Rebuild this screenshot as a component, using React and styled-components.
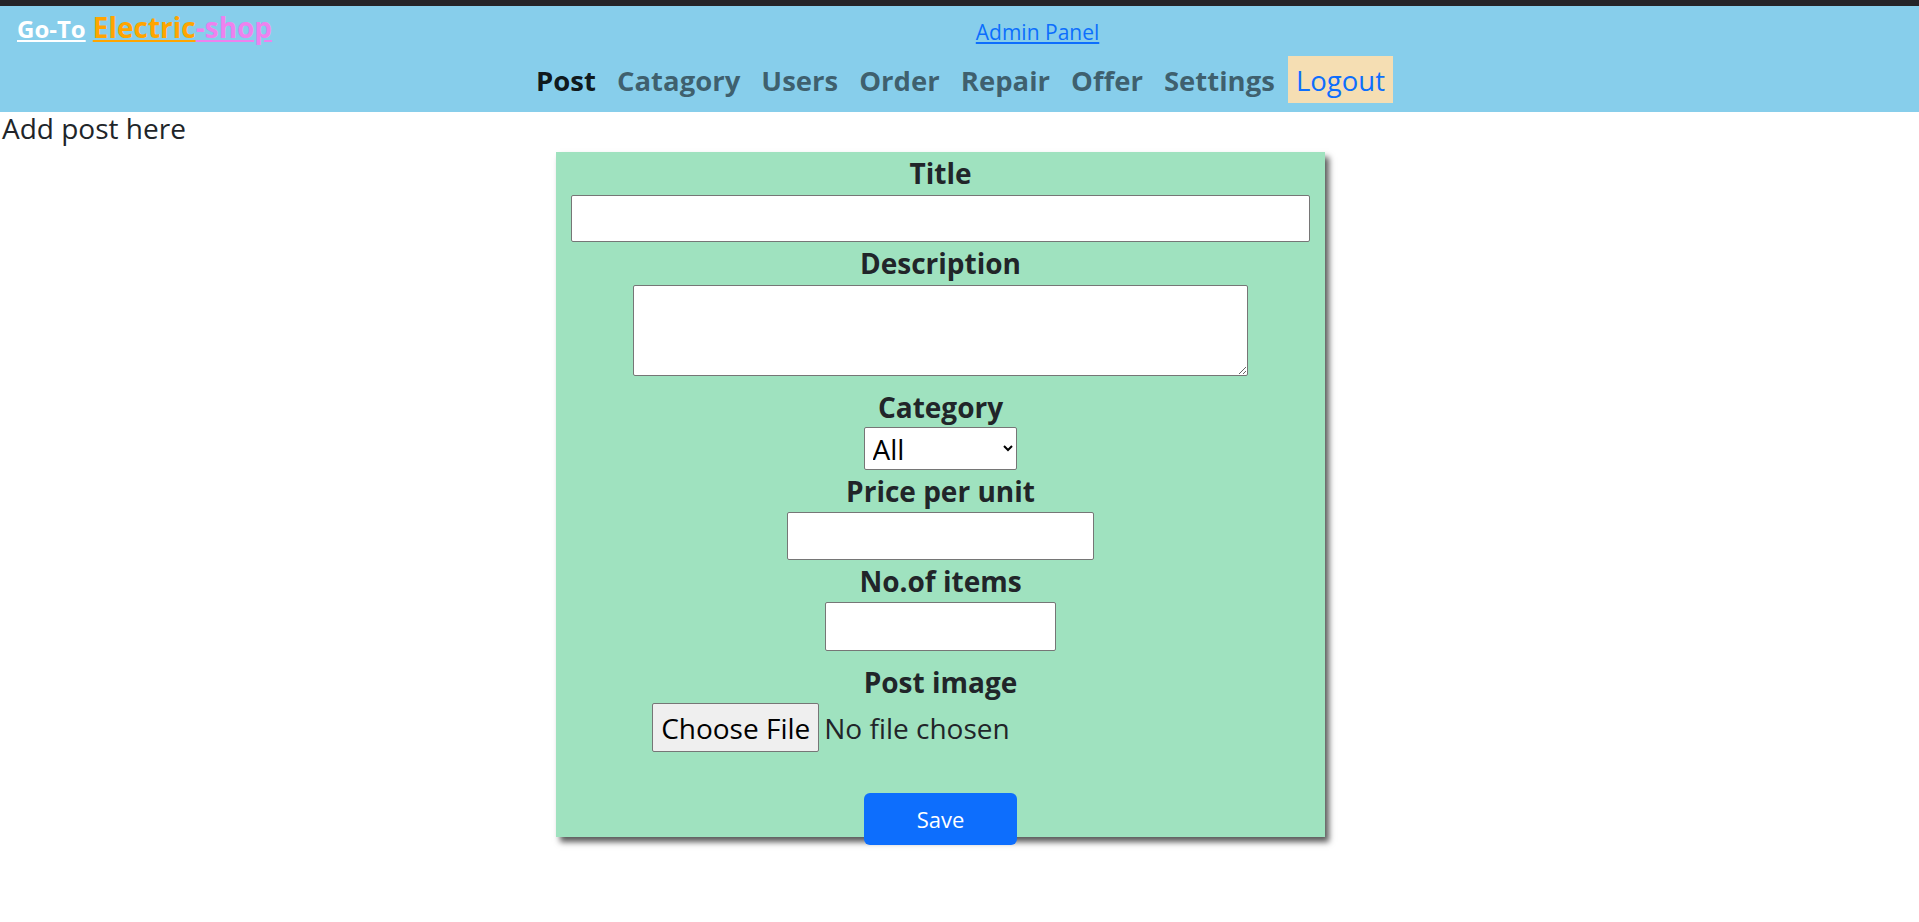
import React from "react";
import styled, { createGlobalStyle } from "styled-components";

const GlobalStyle = createGlobalStyle`
  html, body {
    margin: 0;
    padding: 0;
    background: #ffffff;
  }
  body {
    font-family: "Open Sans", "DejaVu Sans", sans-serif;
    color: #212529;
  }
  *, *::before, *::after {
    box-sizing: border-box;
  }
`;

const TopStrip = styled.div`
  height: 6px;
  background: #252428;
`;

const Header = styled.header`
  background: #87ceeb;
  padding: 0 17px 9px;
`;

const BrandRow = styled.div`
  display: flex;
  justify-content: space-between;
  align-items: flex-start;
  height: 50px;
`;

const Brand = styled.div`
  display: flex;
  align-items: baseline;
  gap: 7px;
  padding-top: 1px;
  line-height: 40px;
  font-weight: 700;
`;

const GoTo = styled.a`
  font-size: 24px;
  color: #ffffff;
  text-decoration: underline;
`;

const ShopName = styled.a`
  font-size: 28px;
  text-decoration: none;
`;

const ShopPart = styled.span`
  color: ${(p) => p.$color};
  text-decoration: underline;
  text-decoration-color: ${(p) => p.$color};
`;

const AdminLink = styled.a`
  padding-top: 11px;
  font-size: 21px;
  line-height: 30px;
  color: #0d6efd;
  text-decoration: underline;
`;

const Spacer = styled.div`
  width: 99px;
`;

const Nav = styled.nav`
  display: flex;
  justify-content: center;
  gap: 5px;
  padding-left: 2px;
`;

const NavLink = styled.a`
  display: block;
  padding: 5px 8px 3px;
  font-size: 27.5px;
  line-height: 39px;
  font-weight: ${(p) => (p.$logout ? 400 : 700)};
  color: ${(p) =>
    p.$logout ? "#0d6efd" : p.$active ? "rgba(0,0,0,0.9)" : "rgba(0,0,0,0.55)"};
  background: ${(p) => (p.$logout ? "#f5deb3" : "transparent")};
  text-decoration: none;
`;

const PageTitle = styled.div`
  padding-left: 2px;
  font-size: 28px;
  line-height: 32px;
  color: #212529;
`;

const Main = styled.main`
  display: flex;
  justify-content: center;
  padding: 8px 38px 40px 0;
`;

const Card = styled.form`
  width: 769px;
  height: 685px;
  padding-top: 4px;
  display: flex;
  flex-direction: column;
  align-items: center;
  background: #9fe2bf;
  box-shadow: 4px 5px 6px #5a5a5a;

  & > * {
    flex-shrink: 0;
  }
`;

const Label = styled.label`
  display: block;
  margin: ${(p) => p.$mt ?? 4}px 0 ${(p) => p.$mb ?? 4}px;
  font-size: 28px;
  line-height: 34px;
  font-weight: 700;
  color: #212529;
  text-align: center;
`;

const TextInput = styled.input`
  display: block;
  width: ${(p) => p.$w};
  height: ${(p) => p.$h}px;
  margin: 0;
  padding: 1px 4px;
  border: 1px solid #767676;
  border-radius: 2px;
  background: #ffffff;
  font-family: inherit;
  font-size: 26px;
`;

const TextArea = styled.textarea`
  display: block;
  width: 80%;
  height: 91px;
  margin: 0;
  padding: 2px 4px;
  border: 1px solid #767676;
  border-radius: 2px;
  background: #ffffff;
  font-family: inherit;
  font-size: 22px;
`;

const Select = styled.select`
  display: block;
  width: 20%;
  height: 43px;
  margin: 0;
  padding: 0 4px;
  border: 1px solid #767676;
  border-radius: 2px;
  background: #ffffff;
  color: #000000;
  font-family: inherit;
  font-size: 28px;
`;

const FileInput = styled.input`
  display: block;
  width: 75%;
  height: 49px;
  margin: 0;
  font-family: inherit;
  font-size: 28px;
  line-height: 49px;
  color: #212529;

  &::file-selector-button {
    height: 49px;
    margin: 0 5px 0 0;
    padding: 0 8px;
    border: 1px solid #767676;
    border-radius: 2px;
    background: #efefef;
    color: #000000;
    font-family: inherit;
    font-size: 28px;
  }
`;

const SaveButton = styled.button`
  display: block;
  width: 20%;
  height: 52px;
  margin-top: 41px;
  border: none;
  border-radius: 6px;
  background: #0d6efd;
  color: #ffffff;
  font-family: inherit;
  font-size: 22px;
  cursor: pointer;
`;

const navItems = ["Post", "Catagory", "Users", "Order", "Repair", "Offer", "Settings"];

export default function App() {
  return (
    <>
      <GlobalStyle />
      <TopStrip />
      <Header>
        <BrandRow>
          <Brand>
            <GoTo href="#">Go-To</GoTo>
            <ShopName href="#">
              <ShopPart $color="#ffa500">Electric</ShopPart>
              <ShopPart $color="#ee82ee">-shop</ShopPart>
            </ShopName>
          </Brand>
          <AdminLink href="#">Admin Panel</AdminLink>
          <Spacer />
        </BrandRow>
        <Nav>
          {navItems.map((item, i) => (
            <NavLink key={item} href="#" $active={i === 0}>
              {item}
            </NavLink>
          ))}
          <NavLink href="#" $logout>
            Logout
          </NavLink>
        </Nav>
      </Header>
      <PageTitle>Add post here</PageTitle>
      <Main>
        <Card onSubmit={(e) => e.preventDefault()}>
          <Label $mt={0} $mb={5}>Title</Label>
          <TextInput type="text" $w="96%" $h={47} />
          <Label $mb={5}>Description</Label>
          <TextArea />
          <Label $mt={14} $mb={3}>Category</Label>
          <Select defaultValue="All">
            <option>All</option>
          </Select>
          <Label>Price per unit</Label>
          <TextInput type="text" $w="40%" $h={48} />
          <Label>No.of items</Label>
          <TextInput type="text" $w="30%" $h={49} />
          <Label $mt={14}>Post image</Label>
          <FileInput type="file" />
          <SaveButton type="submit">Save</SaveButton>
        </Card>
      </Main>
    </>
  );
}
